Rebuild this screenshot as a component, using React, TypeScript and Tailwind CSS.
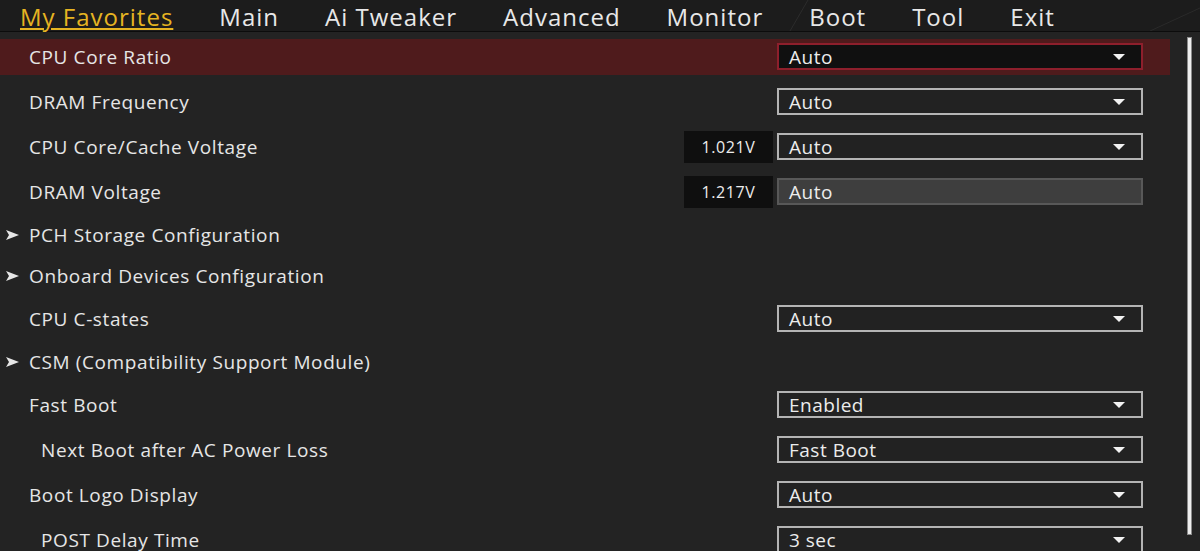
import React from 'react';

type Row =
  | { kind: 'select'; label: string; value: string; indent?: boolean; active?: boolean; volt?: string; disabled?: boolean }
  | { kind: 'link'; label: string };

const tabs = ['My Favorites', 'Main', 'Ai Tweaker', 'Advanced', 'Monitor', 'Boot', 'Tool', 'Exit'];

const rows: Row[] = [
  { kind: 'select', label: 'CPU Core Ratio', value: 'Auto', active: true },
  { kind: 'select', label: 'DRAM Frequency', value: 'Auto' },
  { kind: 'select', label: 'CPU Core/Cache Voltage', value: 'Auto', volt: '1.021V' },
  { kind: 'select', label: 'DRAM Voltage', value: 'Auto', volt: '1.217V', disabled: true },
  { kind: 'link', label: 'PCH Storage Configuration' },
  { kind: 'link', label: 'Onboard Devices Configuration' },
  { kind: 'select', label: 'CPU C-states', value: 'Auto' },
  { kind: 'link', label: 'CSM (Compatibility Support Module)' },
  { kind: 'select', label: 'Fast Boot', value: 'Enabled' },
  { kind: 'select', label: 'Next Boot after AC Power Loss', value: 'Fast Boot', indent: true },
  { kind: 'select', label: 'Boot Logo Display', value: 'Auto' },
  { kind: 'select', label: 'POST Delay Time', value: '3 sec', indent: true },
];

function Caret() {
  return (
    <svg width="12" height="6" viewBox="0 0 12 6" className="shrink-0">
      <path d="M0 0 H12 L6 6 Z" fill="#f2f2f2" />
    </svg>
  );
}

function Arrow() {
  return (
    <svg width="13" height="10" viewBox="0 0 13 10" className="shrink-0">
      <path d="M0 0 L13 5 L0 10 L3 5 Z" fill="#e6e6e6" />
    </svg>
  );
}

function Select({ value, active, disabled }: { value: string; active?: boolean; disabled?: boolean }) {
  const box = active
    ? 'bg-[#101010] border-[#8e1f2c] border-2'
    : disabled
      ? 'bg-[#3e3e3e] border-[#585858] border-2'
      : 'bg-[#222222] border-[#b4b4b4] border-2';
  return (
    <div className={`w-[366px] h-[27px] flex items-center justify-between pl-[10px] pr-[16px] ${box}`}>
      <span className="text-[19px] leading-[20px] tracking-[0.5px] text-[#ececec]">{value}</span>
      {!disabled && <Caret />}
    </div>
  );
}

export default function App() {
  return (
    <div
      className="w-[1200px] h-[551px] overflow-hidden bg-[#232323] text-[#e6e6e6] flex flex-col"
      style={{ fontFamily: '"Open Sans", "Noto Sans", sans-serif' }}
    >
      <nav className="relative h-[32px] shrink-0 bg-[#1c1c1c] border-b border-[#0c0c0c] flex items-start pt-[2px] gap-[46px] pl-[20px]">
        <svg className="absolute inset-0 pointer-events-none" width="1200" height="31">
          <line x1="790" y1="31" x2="808" y2="0" stroke="#2c2c2c" strokeWidth="1" />
          <line x1="1150" y1="31" x2="1200" y2="8" stroke="#2a2a2a" strokeWidth="1" />
        </svg>
        {tabs.map((t, i) => (
          <span
            key={t}
            className={`relative text-[24px] leading-[29px] tracking-[1px] ${
              i === 0
                ? 'text-[#e6b422] underline decoration-2 underline-offset-[2px] decoration-[#e6b422]'
                : 'text-[#e8e8e8]'
            }`}
          >
            {t}
          </span>
        ))}
      </nav>

      <div className="flex flex-1 min-h-0">
        <div className="flex-1 pt-[2px] flex flex-col">
          {rows.map((r) =>
            r.kind === 'link' ? (
              <div key={r.label} className="h-[41px] shrink-0 flex items-center pl-[6px] gap-[10px]">
                <Arrow />
                <span className="text-[19px] leading-[22px] tracking-[0.6px] font-medium">{r.label}</span>
              </div>
            ) : (
              <div key={r.label} className="h-[45px] shrink-0 flex items-center">
                <div
                  className={`h-[36px] w-[1170px] flex items-center ${r.active ? 'bg-[#4f1b1c]' : ''}`}
                >
                  <span
                    className={`flex-1 text-[19px] leading-[20px] tracking-[0.6px] font-medium ${r.indent ? 'pl-[41px]' : 'pl-[29px]'}`}
                  >
                    {r.label}
                  </span>
                  {r.volt && (
                    <div className="w-[89px] h-[32px] mr-[4px] bg-[#0f0f0f] flex items-center justify-center text-[16px] tracking-[0.6px] text-[#ececec]">
                      {r.volt}
                    </div>
                  )}
                  <Select value={r.value} active={r.active} disabled={r.disabled} />
                  <div className="w-[27px]" />
                </div>
              </div>
            )
          )}
        </div>
        <div className="w-[30px] shrink-0 pt-[5px] pl-[17px] flex">
          <div className="w-[5px] h-[498px] bg-[#ededed] border border-[#8a8a8a]" />
        </div>
      </div>
    </div>
  );
}
